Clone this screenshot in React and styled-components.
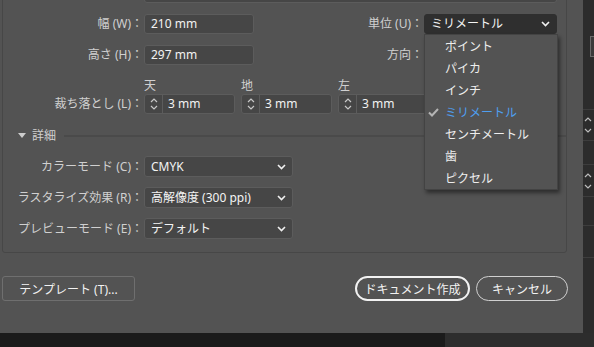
import React from "react";
import styled, { createGlobalStyle } from "styled-components";

const Global = createGlobalStyle`
  html, body { margin: 0; padding: 0; background: #2b2b2b; overflow: hidden; }
  body { font-family: "Noto Sans", "Noto Sans CJK JP", sans-serif; }
  * { box-sizing: border-box; }
`;

const Screen = styled.div`
  width: 594px;
  height: 347px;
  display: grid;
  grid-template-columns: 583px 11px;
  grid-template-rows: 333px 14px;
  overflow: hidden;
`;

const Dialog = styled.div`
  background: #535353;
  padding: 0 15px 0 2px;
  display: flex;
  flex-direction: column;
  overflow: hidden;
`;

const Panel = styled.div`
  margin-top: -30px;
  width: 565px;
  border: 1px solid #474747;
  border-radius: 3px;
  padding: 12px 0 13px 0;
  display: flex;
  flex-direction: column;
`;

const Row = styled.div`
  display: grid;
  grid-template-columns: 140px 110px 1fr 133px;
  column-gap: 1px;
  padding-right: 9px;
  height: 20px;
  align-items: center;
  margin-top: ${(p) => p.$mt || 0}px;
`;

const Label = styled.div`
  font-size: 12px;
  line-height: 20px;
  color: #d0d0d0;
  text-align: right;
  white-space: nowrap;
`;

const Input = styled.div`
  height: 20px;
  grid-column: ${(p) => p.$span || "auto"};
  background: #464646;
  border: 1px solid #5c5c5c;
  border-radius: 3px;
  color: #f2f2f2;
  font-size: 12px;
  line-height: 18px;
  padding: 0 6px;
  white-space: nowrap;
`;

const SelectWrap = styled.div`
  position: relative;
  height: 20px;
`;

const Select = styled.div`
  height: ${(p) => (p.$open ? 20 : 21)}px;
  width: ${(p) => p.$w || 149}px;
  background: ${(p) => (p.$open ? "#2f2f2f" : "#464646")};
  border: 1px solid ${(p) => (p.$open ? "#2f2f2f" : "#5c5c5c")};
  border-radius: 3px;
  color: #f4f4f4;
  font-size: 12px;
  line-height: 18px;
  padding: 0 6px;
  display: flex;
  align-items: center;
  justify-content: space-between;
  white-space: nowrap;
`;

const Chevron = () => (
  <svg width="9" height="6" viewBox="0 0 9 6">
    <path d="M1 1 L4.5 4.5 L8 1" fill="none" stroke="#f0f0f0" strokeWidth="1.6" />
  </svg>
);

const Menu = styled.div`
  position: absolute;
  top: 20px;
  left: 0;
  width: 134px;
  background: #535353;
  border: 1px solid #434343;
  box-shadow: 2px 3px 4px rgba(0, 0, 0, 0.45);
  z-index: 5;
`;

const MenuItem = styled.div`
  height: 22px;
  display: flex;
  align-items: center;
  font-size: 12px;
  color: ${(p) => (p.$active ? "#4f9ff0" : "#eeeeee")};
  padding-left: 3px;
`;

const Check = styled.span`
  width: 17px;
  display: inline-flex;
  justify-content: flex-start;
  align-items: center;
`;

const BleedBlock = styled.div`
  margin-top: 13px;
  display: grid;
  grid-template-columns: 140px 1fr;
  column-gap: 1px;
  grid-template-rows: 16px 20px;
`;

const Steppers = styled.div`
  display: flex;
  gap: 6px;
  grid-column: 2;
`;

const Heads = styled.div`
  display: flex;
  gap: 6px;
  grid-column: 2;
`;

const Head = styled.div`
  width: 91px;
  flex-shrink: 0;
  font-size: 12px;
  line-height: 16px;
  color: #d0d0d0;
`;

const Stepper = styled.div`
  width: 91px;
  height: 20px;
  background: #464646;
  border: 1px solid #5c5c5c;
  border-radius: 3px;
  display: flex;
  align-items: stretch;
  flex-shrink: 0;
`;

const Spin = styled.div`
  width: 18px;
  border-right: 1px solid #5c5c5c;
  display: flex;
  align-items: center;
  justify-content: center;
`;

const StepValue = styled.div`
  font-size: 12px;
  line-height: 18px;
  color: #f2f2f2;
  padding-left: 5px;
`;

const SpinIcon = () => (
  <svg width="8" height="14" viewBox="0 0 8 14">
    <path d="M1 5 L4 2 L7 5 M1 9 L4 12 L7 9" fill="none" stroke="#c8c8c8" strokeWidth="1.2" />
  </svg>
);

const DetailsHeader = styled.div`
  margin-top: 15px;
  height: 14px;
  display: flex;
  align-items: center;
  padding-left: 15px;
  gap: 6px;
`;

const DetailsTitle = styled.span`
  font-size: 12px;
  color: #d0d0d0;
  line-height: 14px;
`;

const Rule = styled.div`
  flex: 1;
  height: 2px;
  background: #4a4a4a;
  margin-left: 2px;
`;

const SelRow = styled.div`
  display: grid;
  grid-template-columns: 140px 149px;
  column-gap: 1px;
  height: 21px;
  align-items: center;
  margin-top: ${(p) => p.$mt || 0}px;
`;

const Buttons = styled.div`
  margin-top: 23px;
  display: flex;
  align-items: center;
  height: 25px;
`;

const Button = styled.button`
  height: 25px;
  font-family: inherit;
  font-size: 12px;
  color: #f2f2f2;
  background: transparent;
  padding: 0;
  white-space: nowrap;
  cursor: default;
  ${(p) =>
    p.$kind === "plain"
      ? `border: 1px solid #6f6f6f; border-radius: 3px; width: 133px;`
      : p.$kind === "primary"
      ? `border: 2px solid #f2f2f2; border-radius: 13px; width: 115px;`
      : `border: 1.5px solid #d0d0d0; border-radius: 13px; width: 92px;`}
`;

const Spacer = styled.div`
  flex: 1;
`;

const Gap = styled.div`
  width: 6px;
`;

const Side = styled.div`
  background: #2c2c2c;
  display: flex;
  flex-direction: column;
`;

const SideBox = styled.div`
  margin-top: 36px;
  margin-left: 7px;
  height: 21px;
  border: 1px solid #6a6a6a;
  border-right: none;
  background: #3a3a3a;
`;

const SideLine = styled.div`
  margin-top: ${(p) => p.$mt}px;
  height: 1px;
  background: #3d3d3d;
`;

const SideChev = styled.div`
  margin-top: ${(p) => p.$mt}px;
  padding-left: 1px;
  height: 16px;
`;

const Footer = styled.div`
  grid-column: 1 / span 2;
  display: flex;
`;

const FootDark = styled.div`
  width: 445px;
  background: #1b1b1b;
`;

const FootMid = styled.div`
  flex: 1;
  background: #2d2d2d;
`;

const units = ["ポイント", "パイカ", "インチ", "ミリメートル", "センチメートル", "歯", "ピクセル"];

const SideChevIcon = () => (
  <svg width="8" height="16" viewBox="0 0 8 16">
    <path d="M1 4 L4 1 L7 4 M1 12 L4 15 L7 12" fill="none" stroke="#bdbdbd" strokeWidth="1.2" />
  </svg>
);

export default function App() {
  return (
    <>
      <Global />
      <Screen>
        <Dialog>
          <Panel>
            <Row>
              <Label>名前 (N)：</Label>
              <Input $span="2 / span 3">名称未設定-1</Input>
            </Row>
            <Row $mt={11}>
              <Label>幅 (W)：</Label>
              <Input>210 mm</Input>
              <Label>単位 (U)：</Label>
              <SelectWrap>
                <Select $open $w={133}>
                  <span>ミリメートル</span>
                  <Chevron />
                </Select>
                <Menu>
                  {units.map((u) => (
                    <MenuItem key={u} $active={u === "ミリメートル"}>
                      <Check>
                        {u === "ミリメートル" && (
                          <svg width="11" height="9" viewBox="0 0 11 9">
                            <path d="M1 4.5 L4 7.5 L10 1" fill="none" stroke="#b4b4b4" strokeWidth="2" />
                          </svg>
                        )}
                      </Check>
                      <span>{u}</span>
                    </MenuItem>
                  ))}
                </Menu>
              </SelectWrap>
            </Row>
            <Row $mt={11}>
              <Label>高さ (H)：</Label>
              <Input>297 mm</Input>
              <Label>方向：</Label>
              <div />
            </Row>
            <BleedBlock>
              <div />
              <Heads>
                <Head>天</Head>
                <Head>地</Head>
                <Head>左</Head>
                <Head>右</Head>
              </Heads>
              <Label>裁ち落とし (L)：</Label>
              <Steppers>
                {[0, 1, 2, 3].map((i) => (
                  <Stepper key={i}>
                    <Spin>
                      <SpinIcon />
                    </Spin>
                    <StepValue>3 mm</StepValue>
                  </Stepper>
                ))}
              </Steppers>
            </BleedBlock>
            <DetailsHeader>
              <svg width="8" height="6" viewBox="0 0 8 6">
                <path d="M0 0 L8 0 L4 5 Z" fill="#cdcdcd" />
              </svg>
              <DetailsTitle>詳細</DetailsTitle>
              <Rule />
            </DetailsHeader>
            <SelRow $mt={13}>
              <Label>カラーモード (C)：</Label>
              <Select>
                <span>CMYK</span>
                <Chevron />
              </Select>
            </SelRow>
            <SelRow $mt={10}>
              <Label>ラスタライズ効果 (R)：</Label>
              <Select>
                <span>高解像度 (300 ppi)</span>
                <Chevron />
              </Select>
            </SelRow>
            <SelRow $mt={10}>
              <Label>プレビューモード (E)：</Label>
              <Select>
                <span>デフォルト</span>
                <Chevron />
              </Select>
            </SelRow>
          </Panel>
          <Buttons>
            <Button $kind="plain">テンプレート (T)...</Button>
            <Spacer />
            <Button $kind="primary">ドキュメント作成</Button>
            <Gap />
            <Button $kind="secondary">キャンセル</Button>
          </Buttons>
        </Dialog>
        <Side>
          <SideBox />
          <SideLine $mt={52} />
          <SideChev $mt={6}>
            <SideChevIcon />
          </SideChev>
          <SideLine $mt={8} />
          <SideLine $mt={23} />
          <SideChev $mt={7}>
            <SideChevIcon />
          </SideChev>
          <SideLine $mt={8} />
          <SideLine $mt={28} />
          <SideLine $mt={31} />
        </Side>
        <Footer>
          <FootDark />
          <FootMid />
        </Footer>
      </Screen>
    </>
  );
}
